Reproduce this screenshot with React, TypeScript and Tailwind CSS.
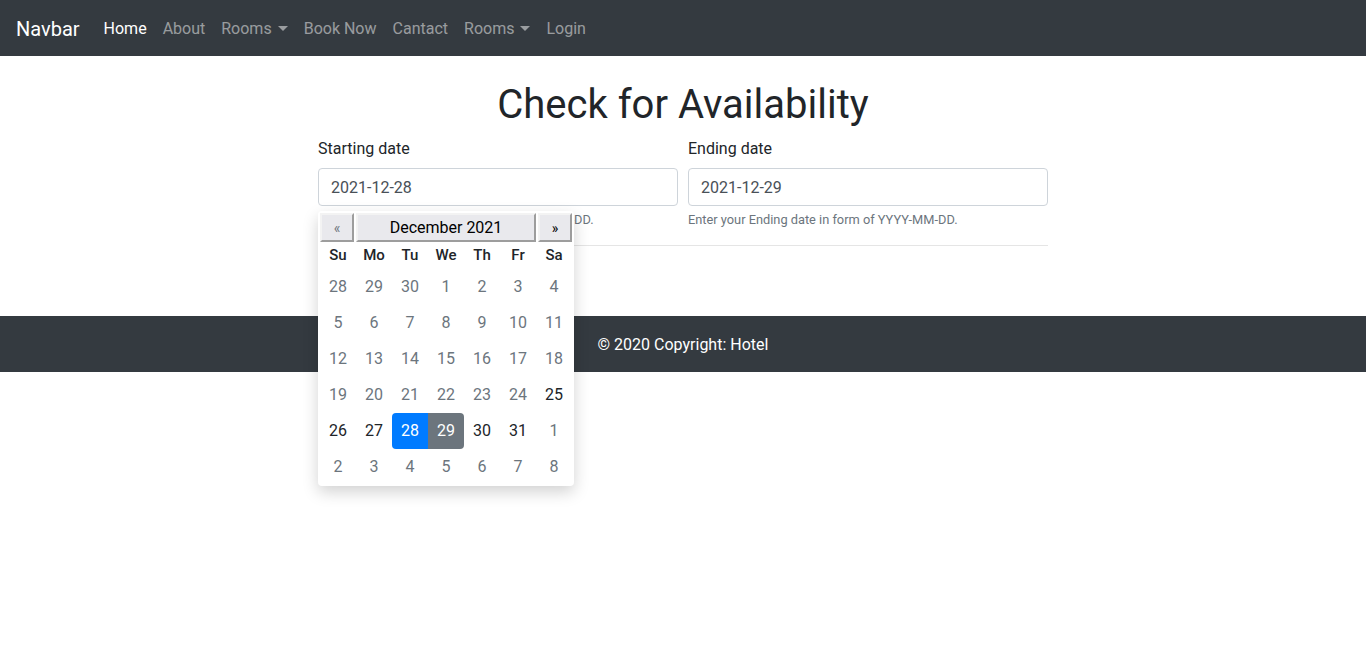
import React from "react";

const navLinks = [
  { label: "Home", active: true },
  { label: "About" },
  { label: "Rooms", dropdown: true },
  { label: "Book Now" },
  { label: "Cantact" },
  { label: "Rooms", dropdown: true },
  { label: "Login" },
];

const weekDays = ["Su", "Mo", "Tu", "We", "Th", "Fr", "Sa"];

// [day, isActiveDate]
const weeks: [number, boolean][][] = [
  [[28, false], [29, false], [30, false], [1, false], [2, false], [3, false], [4, false]],
  [[5, false], [6, false], [7, false], [8, false], [9, false], [10, false], [11, false]],
  [[12, false], [13, false], [14, false], [15, false], [16, false], [17, false], [18, false]],
  [[19, false], [20, false], [21, false], [22, false], [23, false], [24, false], [25, true]],
  [[26, true], [27, true], [28, true], [29, true], [30, true], [31, true], [1, false]],
  [[2, false], [3, false], [4, false], [5, false], [6, false], [7, false], [8, false]],
];

const Caret = () => (
  <span className="ml-[6px] inline-block align-[3px] border-t-[5px] border-x-[5px] border-x-transparent border-t-current" />
);

const Navbar = () => (
  <nav className="h-14 bg-[#343a40] flex items-center px-4 pt-[2px]">
    <a className="text-white text-[20px] mr-4 leading-[30px]">Navbar</a>
    <ul className="flex items-center">
      {navLinks.map((l, i) => (
        <li key={i}>
          <a
            className={`px-2 py-2 text-[16px] leading-6 ${
              l.active ? "text-white" : "text-white/50"
            }`}
          >
            {l.label}
            {l.dropdown && <Caret />}
          </a>
        </li>
      ))}
    </ul>
  </nav>
);

const Calendar = () => (
  <div className="absolute left-0 top-[75px] w-[256px] bg-white rounded-[4px] px-[2px] pt-[2px] pb-px shadow-[0_6px_16px_rgba(0,0,0,0.18)] z-10">
    <div className="flex gap-[2px] h-[29px]">
      {["«", "December 2021", "»"].map((t, i) => (
        <button
          key={i}
          className={`${
            i === 1 ? "flex-1 text-black text-[16px]" : "w-[34px] text-[14px]"
          } ${i === 0 ? "text-[#6c757d]" : "text-black"} bg-[#e9e9ed] border-2 border-t-[#f3f3f3] border-l-[#f3f3f3] border-r-[#9d9d9d] border-b-[#9d9d9d] leading-none`}
        >
          {t}
        </button>
      ))}
    </div>
    <div className="grid grid-cols-7 h-[27px] items-center">
      {weekDays.map((d) => (
        <div key={d} className="text-center text-[15px] font-medium text-[#212529]">
          {d}
        </div>
      ))}
    </div>
    {weeks.map((w, wi) => (
      <div key={wi} className="grid grid-cols-7">
        {w.map(([d, on], di) => {
          const start = wi === 4 && d === 28;
          const end = wi === 4 && d === 29;
          return (
            <div
              key={di}
              className={`h-9 flex items-center justify-center text-[16px] ${
                start
                  ? "bg-[#007bff] text-white rounded-l-[4px]"
                  : end
                  ? "bg-[#6c757d] text-white rounded-r-[4px]"
                  : on
                  ? "text-[#212529]"
                  : "text-[#6c757d]"
              }`}
            >
              {d}
            </div>
          );
        })}
      </div>
    ))}
  </div>
);

const DateField = ({
  label,
  value,
  help,
  withCalendar,
}: {
  label: string;
  value: string;
  help: string;
  withCalendar?: boolean;
}) => (
  <div className="flex-1 relative">
    <label className="block pt-px mb-[7px] text-[16px] leading-6">{label}</label>
    <input
      readOnly
      value={value}
      className="w-full h-[38px] px-3 border border-[#ced4da] rounded-[4px] text-[16px] text-[#495057] outline-none"
    />
    <small className="block mt-1 text-[12.8px] leading-[19px] text-[#6c757d]">{help}</small>
    {withCalendar && <Calendar />}
  </div>
);

const App: React.FC = () => {
  return (
    <div
      className="min-h-screen bg-white text-[#212529]"
      style={{ fontFamily: "Roboto, 'Liberation Sans', sans-serif" }}
    >
      <Navbar />
      <main className="w-[730px] mx-auto pt-[25px] h-[260px]">
        <h1 className="text-[40px] leading-[48px] text-center mb-[7px] font-normal">
          Check for Availability
        </h1>
        <div className="flex gap-[10px]">
          <DateField
            label="Starting date"
            value="2021-12-28"
            help="Enter your Starting date in form of YYYY-MM-DD."
            withCalendar
          />
          <DateField
            label="Ending date"
            value="2021-12-29"
            help="Enter your Ending date in form of YYYY-MM-DD."
          />
        </div>
        <hr className="mt-4 border-t border-black/10" />
      </main>
      <footer className="h-14 bg-[#343a40] flex items-center justify-center text-white text-[16px] pt-px">
        © 2020 Copyright: Hotel
      </footer>
    </div>
  );
};

export default App;
